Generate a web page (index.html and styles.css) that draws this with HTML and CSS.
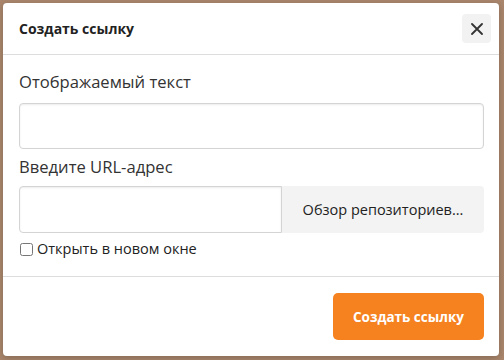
FILE: index.html
```html
<!DOCTYPE html>
<html lang="ru">
<head>
    <meta charset="UTF-8">
    <title>Создать ссылку</title>
    <link rel="stylesheet" href="styles.css">
</head>
<body>
    <div class="modal">
        <div class="modal-header">
            <h2>Создать ссылку</h2>
            <button class="close-btn" aria-label="Закрыть">
                <svg width="12" height="12" viewBox="0 0 12 12"><path d="M1 1L11 11M11 1L1 11" stroke="#333" stroke-width="1.8" stroke-linecap="round"/></svg>
            </button>
        </div>
        <div class="modal-body">
            <label class="field-label">Отображаемый текст</label>
            <input class="text-input" type="text">

            <label class="field-label second">Введите URL-адрес</label>
            <div class="url-row">
                <input class="text-input url-input" type="text">
                <button class="browse-btn">Обзор репозиториев...</button>
            </div>

            <label class="check-row">
                <input type="checkbox">
                Открыть в новом окне
            </label>
        </div>
        <div class="modal-footer">
            <button class="primary-btn">Создать ссылку</button>
        </div>
    </div>
</body>
</html>
```

FILE: styles.css
```css
body {
    margin: 0;
    padding: 3px 5px 4px 3px;
    background: #a8856b;
    font-family: "Open Sans", "Noto Sans", sans-serif;
    color: #333;
}
.modal {
    background: #fff;
    border-radius: 4px;
    height: 353px;
    box-sizing: border-box;
    display: flex;
    flex-direction: column;
    box-shadow: 0 2px 6px rgba(0, 0, 0, 0.2);
}
.modal-header {
    height: 51px;
    display: flex;
    align-items: center;
    justify-content: space-between;
    padding: 0 8px 0 16px;
    border-bottom: 1px solid #ddd;
}
.modal-header h2 {
    margin: 0;
    font-size: 14px;
    font-weight: 700;
    color: #222;
}
.close-btn {
    width: 29px;
    height: 29px;
    border: none;
    border-radius: 4px;
    background: #f2f2f2;
    display: flex;
    align-items: center;
    justify-content: center;
    padding: 0;
}
.modal-body {
    padding: 16px 15px 17px 16px;
    display: flex;
    flex-direction: column;
}
.field-label {
    font-size: 16.6px;
    line-height: 22px;
    color: #333;
}
.field-label.second {
    margin-top: 7px;
}
.text-input {
    margin-top: 10px;
    height: 46px;
    box-sizing: border-box;
    border: 1px solid #d4d4d4;
    border-radius: 4px;
    box-shadow: inset 0 1px 2px rgba(0, 0, 0, 0.08);
    font-family: inherit;
    font-size: 14px;
    padding: 0 10px;
}
.url-row {
    display: flex;
    margin-top: 8px;
    height: 47px;
}
.url-input {
    margin-top: 0;
    height: 47px;
    width: 263px;
    border-radius: 4px 0 0 4px;
}
.browse-btn {
    flex: 1;
    border: none;
    background: #f3f3f3;
    font-family: inherit;
    font-size: 14.5px;
    color: #222;
    border-radius: 0 4px 4px 0;
}
.check-row {
    margin-top: 6px;
    display: flex;
    align-items: center;
    font-size: 14.5px;
    line-height: 20px;
    color: #222;
}
.check-row input {
    margin: 0 4px 0 1px;
    width: 13px;
    height: 13px;
}
.modal-footer {
    border-top: 1px solid #ddd;
    padding: 16px 15px 15px;
    display: flex;
    justify-content: flex-end;
}
.primary-btn {
    width: 151px;
    height: 47px;
    border: none;
    border-radius: 5px;
    background: #f5821f;
    color: #fff;
    font-family: inherit;
    font-size: 13.5px;
    font-weight: 700;
}
```
